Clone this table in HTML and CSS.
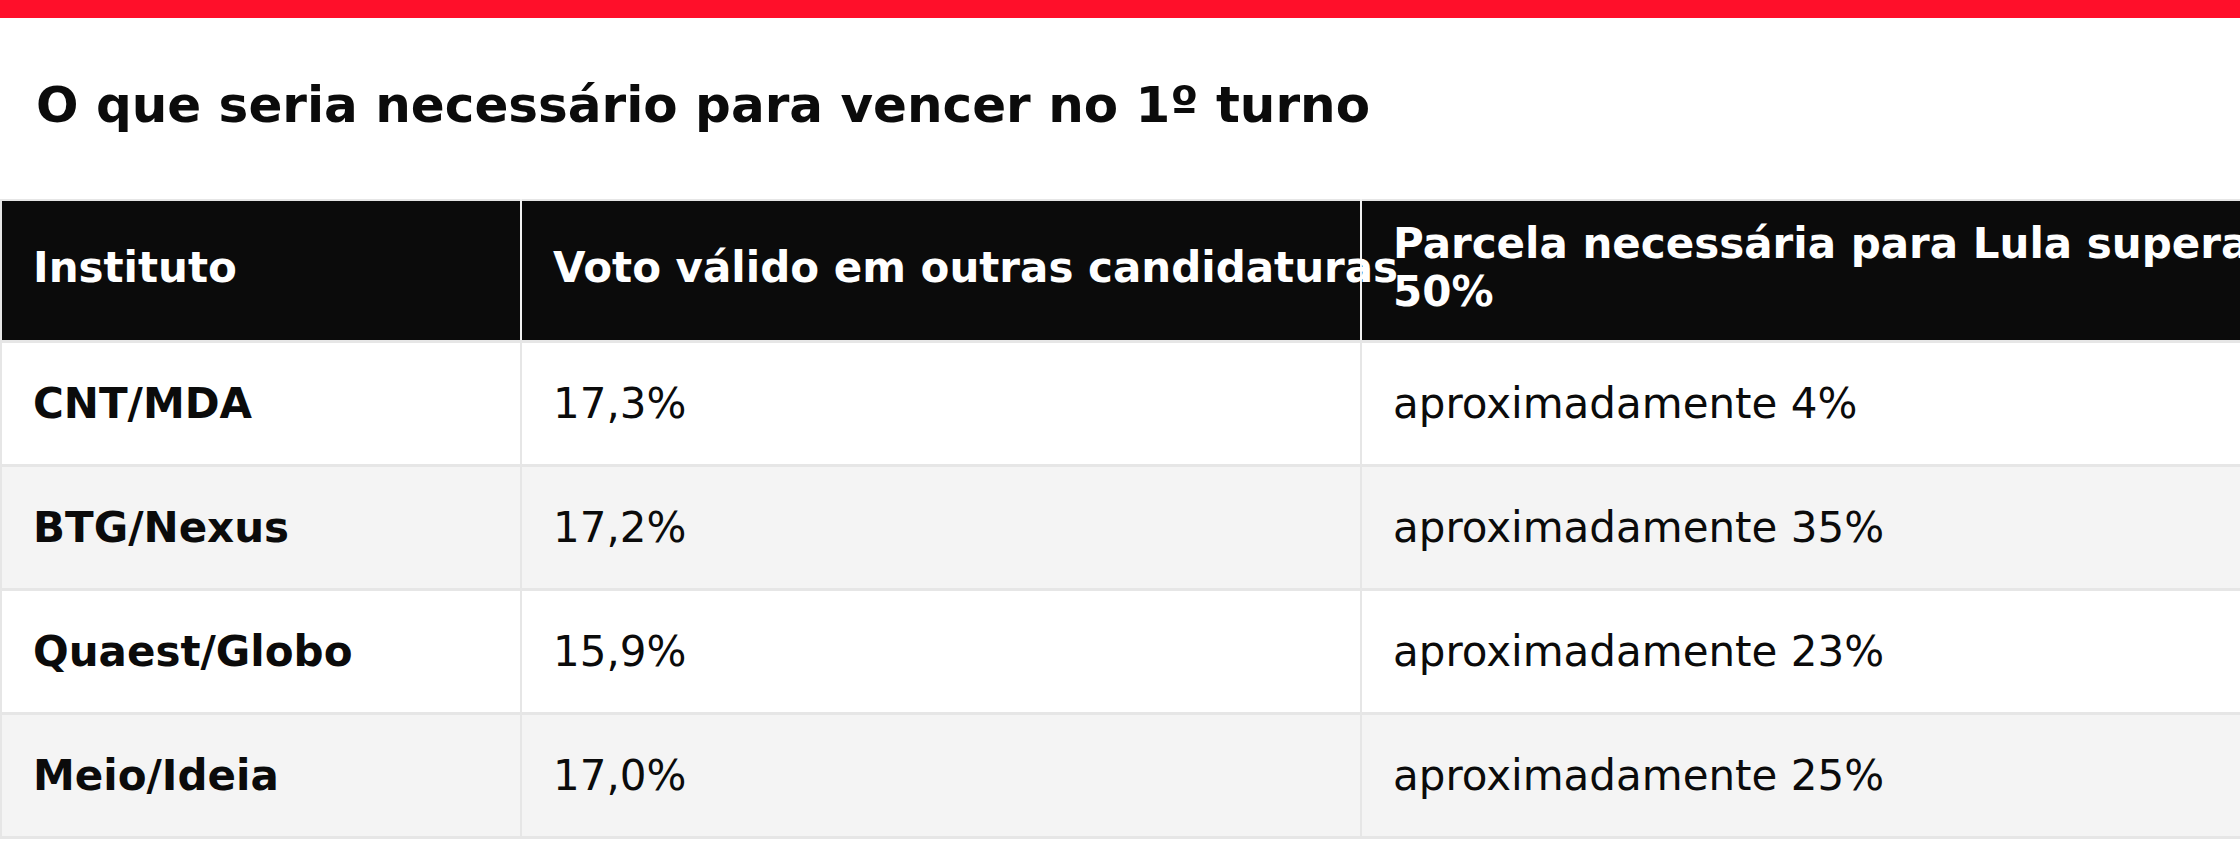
FILE: index.html
```html
<!DOCTYPE html>
<html lang="pt-BR">
<head>
<meta charset="utf-8">
<title>O que seria necessário para vencer no 1º turno</title>
<link rel="stylesheet" href="styles.css">
</head>
<body>
<div class="topbar"></div>
<h1 class="title">O que seria necessário para vencer no 1º turno</h1>
<table class="poll">
  <colgroup>
    <col class="c1">
    <col class="c2">
    <col class="c3">
  </colgroup>
  <thead>
    <tr>
      <th>Instituto</th>
      <th>Voto válido em outras candidaturas</th>
      <th>Parcela necessária para Lula superar<br>50%</th>
    </tr>
  </thead>
  <tbody>
    <tr>
      <td class="name">CNT/MDA</td>
      <td>17,3%</td>
      <td>aproximadamente 4%</td>
    </tr>
    <tr>
      <td class="name">BTG/Nexus</td>
      <td>17,2%</td>
      <td>aproximadamente 35%</td>
    </tr>
    <tr>
      <td class="name">Quaest/Globo</td>
      <td>15,9%</td>
      <td>aproximadamente 23%</td>
    </tr>
    <tr>
      <td class="name">Meio/Ideia</td>
      <td>17,0%</td>
      <td>aproximadamente 25%</td>
    </tr>
  </tbody>
</table>
</body>
</html>
```

FILE: styles.css
```css
html, body {
  margin: 0;
  padding: 0;
  background: #ffffff;
  overflow: hidden;
}

body {
  font-family: "DejaVu Sans", sans-serif;
  color: #0b0b0b;
  width: 2240px;
}

.topbar {
  height: 18px;
  background: #ff0f2a;
}

.title {
  margin: 56px 0 63px 36px;
  font-size: 50px;
  line-height: 62px;
  font-weight: bold;
  color: #0b0b0b;
}

.poll {
  width: 2240px;
  table-layout: fixed;
  border-collapse: collapse;
  border: 2px solid #e6e6e6;
}

.c1 { width: 520px; }
.c2 { width: 840px; }
.c3 { width: 880px; }

.poll th {
  background: #0b0b0b;
  color: #ffffff;
  font-size: 42px;
  font-weight: bold;
  line-height: 48px;
  text-align: left;
  white-space: nowrap;
  height: 133px;
  padding: 0 31px 6px;
  vertical-align: middle;
  border-right: 2px solid #f2f2f2;
  border-bottom: 3px solid #e6e6e6;
  overflow: visible;
}

.poll th:last-child {
  border-right: 2px solid #e6e6e6;
}

.poll td {
  font-size: 42px;
  line-height: 48px;
  height: 121px;
  padding: 0 31px;
  vertical-align: middle;
  border: 2px solid #e6e6e6;
  border-bottom-width: 3px;
  color: #0b0b0b;
}

.poll tbody tr:nth-child(even) td {
  background: #f4f4f4;
}

.poll td.name {
  font-weight: bold;
}
```
